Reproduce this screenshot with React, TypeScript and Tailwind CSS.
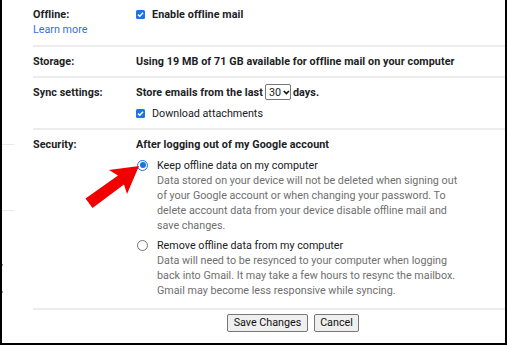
import React from "react";

function CheckBox() {
  return (
    <svg width="9" height="9" viewBox="0 0 9 9" className="shrink-0">
      <rect x="0" y="0" width="9" height="9" rx="1.5" fill="#1a73e8" />
      <path d="M2 4.6 L3.8 6.3 L7 2.8" stroke="#fff" strokeWidth="1.5" fill="none" />
    </svg>
  );
}

function Radio({ checked }: { checked?: boolean }) {
  return checked ? (
    <span className="shrink-0 w-[11px] h-[11px] rounded-full border-[1.5px] border-[#1a73e8] flex items-center justify-center bg-white">
      <span className="w-[6px] h-[6px] rounded-full bg-[#1a73e8]" />
    </span>
  ) : (
    <span className="shrink-0 w-[11px] h-[11px] rounded-full border border-[#767676] bg-white" />
  );
}

function Row({
  label,
  first,
  className,
  children,
}: {
  label?: React.ReactNode;
  first?: boolean;
  className?: string;
  children: React.ReactNode;
}) {
  return (
    <div className={(first ? "" : "border-t-2 border-[#ececec] ") + "flex " + (className ?? "")}>
      <div className="w-[103px] shrink-0">{label}</div>
      <div className="flex-1">{children}</div>
    </div>
  );
}

export default function App() {
  return (
    <div className="relative w-[507px] h-[345px] overflow-hidden bg-white border-l-2 border-r-2 border-b-2 border-black font-['Roboto','Liberation_Sans',sans-serif] text-[10.75px] leading-[15px] text-[#202124]">
      {/* leftovers of the page behind the crop */}
      <div className="absolute left-0 top-[144px] w-[12px] h-px bg-[#e8e8e8]" />
      <div className="absolute left-0 top-[210px] w-[12px] h-px bg-[#e8e8e8]" />
      <div className="absolute left-0 top-[264px] w-[1px] h-[2px] bg-[#9a9a9a]" />
      <div className="absolute left-0 top-[291px] w-[1px] h-[2px] bg-[#9a9a9a]" />

      <div className="ml-[31px]">
        <Row
          first
          className="pt-[6.5px] pb-[8px]"
          label={
            <div>
              <div className="font-bold tracking-[0.08px]">Offline:</div>
              <a className="text-[#3a6fd6]">Learn more</a>
            </div>
          }
        >
          <div className="flex items-center font-bold tracking-[0.08px]">
            <CheckBox />
            <span className="ml-[7px]">Enable offline mail</span>
          </div>
        </Row>

        <Row className="pt-[7px] pb-[7px]" label={<div className="font-bold tracking-[0.08px]">Storage:</div>}>
          <div className="font-bold tracking-[0.08px]">
            Using 19 MB of 71 GB available for offline mail on your computer
          </div>
        </Row>

        <Row
          className="pt-[6.5px] pb-[6.5px]"
          label={<div className="font-bold tracking-[0.08px] h-[16px] flex items-center">Sync settings:</div>}
        >
          <div className="flex items-center h-[16px] font-bold tracking-[0.08px]">
            <span>Store emails from the last</span>
            <span className="ml-[2px] mr-[2px] h-[16px] w-[26px] border border-[#767676] rounded-[2px] flex items-center pl-[3px] font-normal">
              30
              <svg width="7" height="5" viewBox="0 0 7 5" className="ml-[2px]">
                <path d="M0.8 0.9 L3.5 3.7 L6.2 0.9" stroke="#111" strokeWidth="1.6" fill="none" />
              </svg>
            </span>
            <span>days.</span>
          </div>
          <div className="flex items-center mt-[6px]">
            <CheckBox />
            <span className="ml-[7px]">Download attachments</span>
          </div>
        </Row>

        <Row className="pt-[7px] pb-[10px]" label={<div className="font-bold tracking-[0.08px]">Security:</div>}>
          <div className="font-bold tracking-[0.08px]">After logging out of my Google account</div>
          <div className="flex mt-[6px] pl-[1px]">
            <div className="h-[15px] flex items-center">
              <Radio checked />
            </div>
            <div className="ml-[9px]">
              <div>Keep offline data on my computer</div>
              <div className="text-[#6f6f6f]">
                Data stored on your device will not be deleted when signing out
                <br />
                of your Google account or when changing your password. To
                <br />
                delete account data from your device disable offline mail and
                <br />
                save changes.
              </div>
            </div>
          </div>
          <div className="flex mt-[5px] pl-[1px]">
            <div className="h-[15px] flex items-center">
              <Radio />
            </div>
            <div className="ml-[9px]">
              <div>Remove offline data from my computer</div>
              <div className="text-[#6f6f6f]">
                Data will need to be resynced to your computer when logging
                <br />
                back into Gmail. It may take a few hours to resync the mailbox.
                <br />
                Gmail may become less responsive while syncing.
              </div>
            </div>
          </div>
        </Row>

        <div className="border-t-2 border-[#ececec] pt-[4px] pl-[194px] flex gap-[6px]">
          <button className="h-[18px] w-[81px] bg-[#efefef] border border-[#767676] rounded-[2px] text-[10.75px] text-[#111]">
            Save Changes
          </button>
          <button className="h-[18px] w-[45px] bg-[#efefef] border border-[#767676] rounded-[2px] text-[10.75px] text-[#111]">
            Cancel
          </button>
        </div>
      </div>

      {/* red arrow pointing at the selected option */}
      <svg className="absolute left-0 top-0 pointer-events-none" width="507" height="345">
        <polygon
          points="137,166 107,170 116,175.5 83.5,198.5 90.5,208 122,184.5 125,194"
          fill="#f00000"
        />
      </svg>
    </div>
  );
}
